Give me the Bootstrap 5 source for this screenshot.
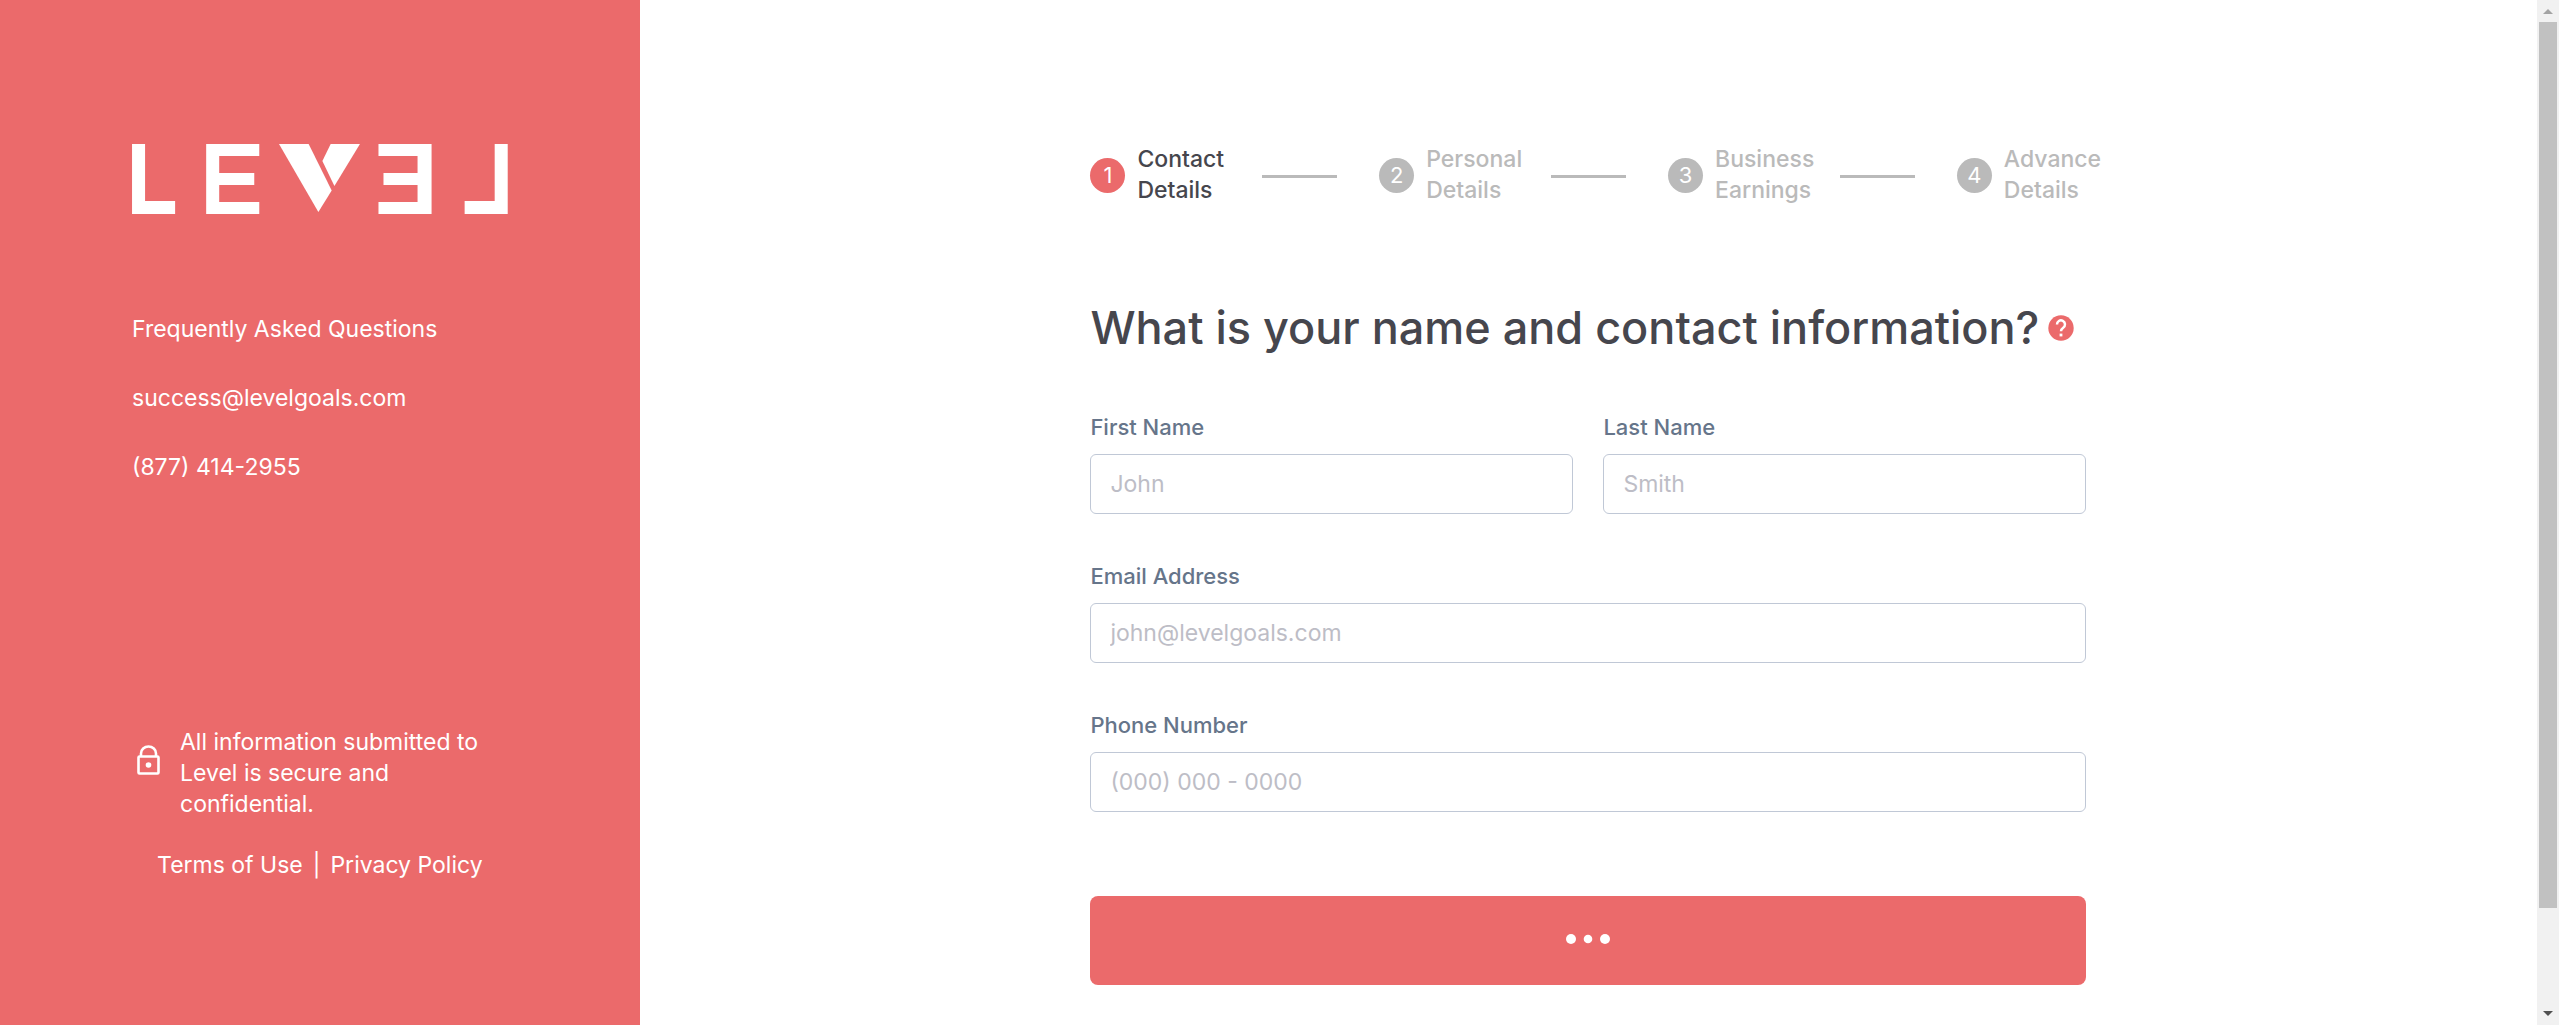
<!DOCTYPE html>
<html lang="en">
<head>
<meta charset="utf-8">
<meta name="viewport" content="width=device-width, initial-scale=1">
<title>Level – Contact Details</title>
<link href="https://cdn.jsdelivr.net/npm/bootstrap@5.3.0/dist/css/bootstrap.min.css" rel="stylesheet">
<style>
  :root { --coral: #eb6a6b; --ink: #46464d; --muted: #bababa; --slate: #66758a; }
  body { font-family: Inter, "Liberation Sans", sans-serif; font-size: 23px; line-height: 31px; color: var(--ink); }
  .side-panel { background: var(--coral); padding: 144px 132px; }
  .side-panel a { color: #fff; text-decoration: none; }
  .side-panel a:hover { text-decoration: underline; }
  .side-links { margin-top: 100px; gap: 38px; }
  .lock-icon { margin-top: 16px; }
  .legal-links { margin-top: 30px; gap: 10px; }
  .form-area { padding-top: 144px; }
  .form-column { max-width: 996px; }
  .step-item { flex: 0 0 29%; gap: 12px; font-size: 23px; font-weight: 500; color: var(--muted); }
  .step-item.current { color: var(--ink); }
  .step-number { width: 35px; height: 35px; background: var(--muted); color: #fff; font-size: 22px; font-weight: 400; }
  .current .step-number { background: var(--coral); }
  .step-label { width: 113px; }
  .step-line { width: 75px; height: 3px; margin-top: 3px; background: var(--muted); }
  .question { margin: 94px 0 57px; gap: 9px; }
  .question h1 { font-size: 45px; line-height: 56px; font-weight: 500; }
  .name-row { --bs-gutter-x: 30px; }
  .field { margin-bottom: 48px; }
  .field label { font-size: 22px; line-height: 28px; font-weight: 500; color: var(--slate); margin-bottom: 13px; }
  .field .form-control { height: 60px; padding: 0 19px; font-size: 23px; border-color: #c0c8d6; border-radius: 6px; color: var(--ink); }
  .field .form-control::placeholder { color: #bdbdc6; }
  .btn-next { height: 89px; margin-top: 36px; border-radius: 8px; background: var(--coral); }
  .btn-next:hover { background: #e25c5d; }
  .scroll-track { flex: 0 0 22px; background: #f1f1f1; }
  .scroll-thumb { flex: 0 0 886px; width: 18px; background: #c1c1c1; }
</style>
</head>
<body>
<div class="d-flex vh-100 overflow-hidden">
  <aside class="side-panel w-25 flex-shrink-0 d-flex flex-column text-white">
    <a href="#" aria-label="Level home">
      <svg class="d-block w-100" viewBox="0 0 375 70" fill="#fff" aria-hidden="true">
        <path d="M0 0h13v57h30v13H0z"/>
        <path d="M74 0h53v12H87v17h35v12H87v17h40v12H74z"/>
        <path d="M146.700 0h29.600l23 46.500L186 68z"/>
        <path d="M198.300 0h29.200L202 42l-12-25z"/>
        <path d="M299 0h-53v12h39v17h-34v12h34v17h-39v12h53z"/>
        <path d="M375 0h-13v57h-30v13h43z"/>
      </svg>
    </a>
    <nav class="side-links d-flex flex-column align-items-start" aria-label="Help">
      <a href="#">Frequently Asked Questions</a>
      <a href="mailto:success@levelgoals.com">success@levelgoals.com</a>
      <a href="tel:8774142955">(877) 414-2955</a>
    </nav>
    <footer class="mt-auto">
      <div class="d-flex align-items-start gap-3">
        <svg class="lock-icon flex-shrink-0" width="32" height="32" viewBox="0 0 32 32" fill="none" stroke="#fff" stroke-width="2.600" aria-hidden="true">
          <path d="M9 13V10.500a7.500 7 0 0 1 15 0V13"/>
          <rect x="6.500" y="13.500" width="20" height="17" rx="1"/>
          <circle cx="16.500" cy="22" r="2.800" fill="#fff" stroke="none"/>
        </svg>
        <span>All information submitted to Level is secure and confidential.</span>
      </div>
      <div class="legal-links d-flex justify-content-center text-nowrap">
        <a href="#">Terms of Use</a><span>|</span><a href="#">Privacy Policy</a>
      </div>
    </footer>
  </aside>

  <main class="form-area flex-grow-1">
    <form class="form-column mx-auto">
      <ol class="d-flex list-unstyled mb-0">
        <li class="step-item current d-flex align-items-center" aria-current="step">
          <span class="step-number rounded-circle d-flex flex-shrink-0 align-items-center justify-content-center">1</span>
          <span class="step-label">Contact Details</span><span class="step-line"></span>
        </li>
        <li class="step-item d-flex align-items-center">
          <span class="step-number rounded-circle d-flex flex-shrink-0 align-items-center justify-content-center">2</span>
          <span class="step-label">Personal Details</span><span class="step-line"></span>
        </li>
        <li class="step-item d-flex align-items-center">
          <span class="step-number rounded-circle d-flex flex-shrink-0 align-items-center justify-content-center">3</span>
          <span class="step-label">Business Earnings</span><span class="step-line"></span>
        </li>
        <li class="step-item d-flex align-items-center">
          <span class="step-number rounded-circle d-flex flex-shrink-0 align-items-center justify-content-center">4</span>
          <span class="step-label">Advance Details</span>
        </li>
      </ol>

      <div class="question d-flex align-items-center">
        <h1 class="mb-0 text-nowrap">What is your name and contact information?</h1>
        <button type="button" class="btn p-0 border-0 d-flex" aria-label="Help">
          <svg width="26" height="26" viewBox="0 0 26 26" aria-hidden="true">
            <circle cx="13" cy="13" r="12.700" fill="#eb6a6b"/>
            <path d="M9 9.500a4 4 0 1 1 6.200 3.200c-1.500 1-2.200 1.700-2.200 3.600" fill="none" stroke="#fff" stroke-width="2.500"/>
            <rect x="11.600" y="18.600" width="2.800" height="2.800" fill="#fff"/>
          </svg>
        </button>
      </div>

      <div class="row name-row">
        <div class="col-6 field">
          <label class="d-block" for="first">First Name</label>
          <input class="form-control" id="first" type="text" placeholder="John">
        </div>
        <div class="col-6 field">
          <label class="d-block" for="last">Last Name</label>
          <input class="form-control" id="last" type="text" placeholder="Smith">
        </div>
      </div>
      <div class="field">
        <label class="d-block" for="email">Email Address</label>
        <input class="form-control" id="email" type="email" placeholder="john@levelgoals.com">
      </div>
      <div class="field">
        <label class="d-block" for="phone">Phone Number</label>
        <input class="form-control" id="phone" type="tel" placeholder="(000) 000 - 0000">
      </div>
      <div class="d-flex">
        <button type="submit" class="btn btn-next w-100 border-0 d-flex align-items-center justify-content-center" aria-label="Loading">
          <svg width="46" height="14" viewBox="0 0 46 14" fill="#fff" aria-hidden="true">
            <circle cx="6" cy="5" r="5"/><circle cx="23" cy="5" r="4.300"/><circle cx="40" cy="5" r="5"/>
          </svg>
        </button>
      </div>
    </form>
  </main>

  <div class="scroll-track d-flex flex-column align-items-center" aria-hidden="true">
    <svg class="flex-shrink-0" width="22" height="22" viewBox="0 0 22 22"><path d="M6 14l5-5 5 5z" fill="#a3a3a3"/></svg>
    <div class="scroll-thumb"></div>
    <svg class="flex-shrink-0 mt-auto" width="22" height="22" viewBox="0 0 22 22"><path d="M6 8l5 5 5-5z" fill="#505050"/></svg>
  </div>
</div>
<script src="https://cdn.jsdelivr.net/npm/bootstrap@5.3.0/dist/js/bootstrap.bundle.min.js"></script>
</body>
</html>
